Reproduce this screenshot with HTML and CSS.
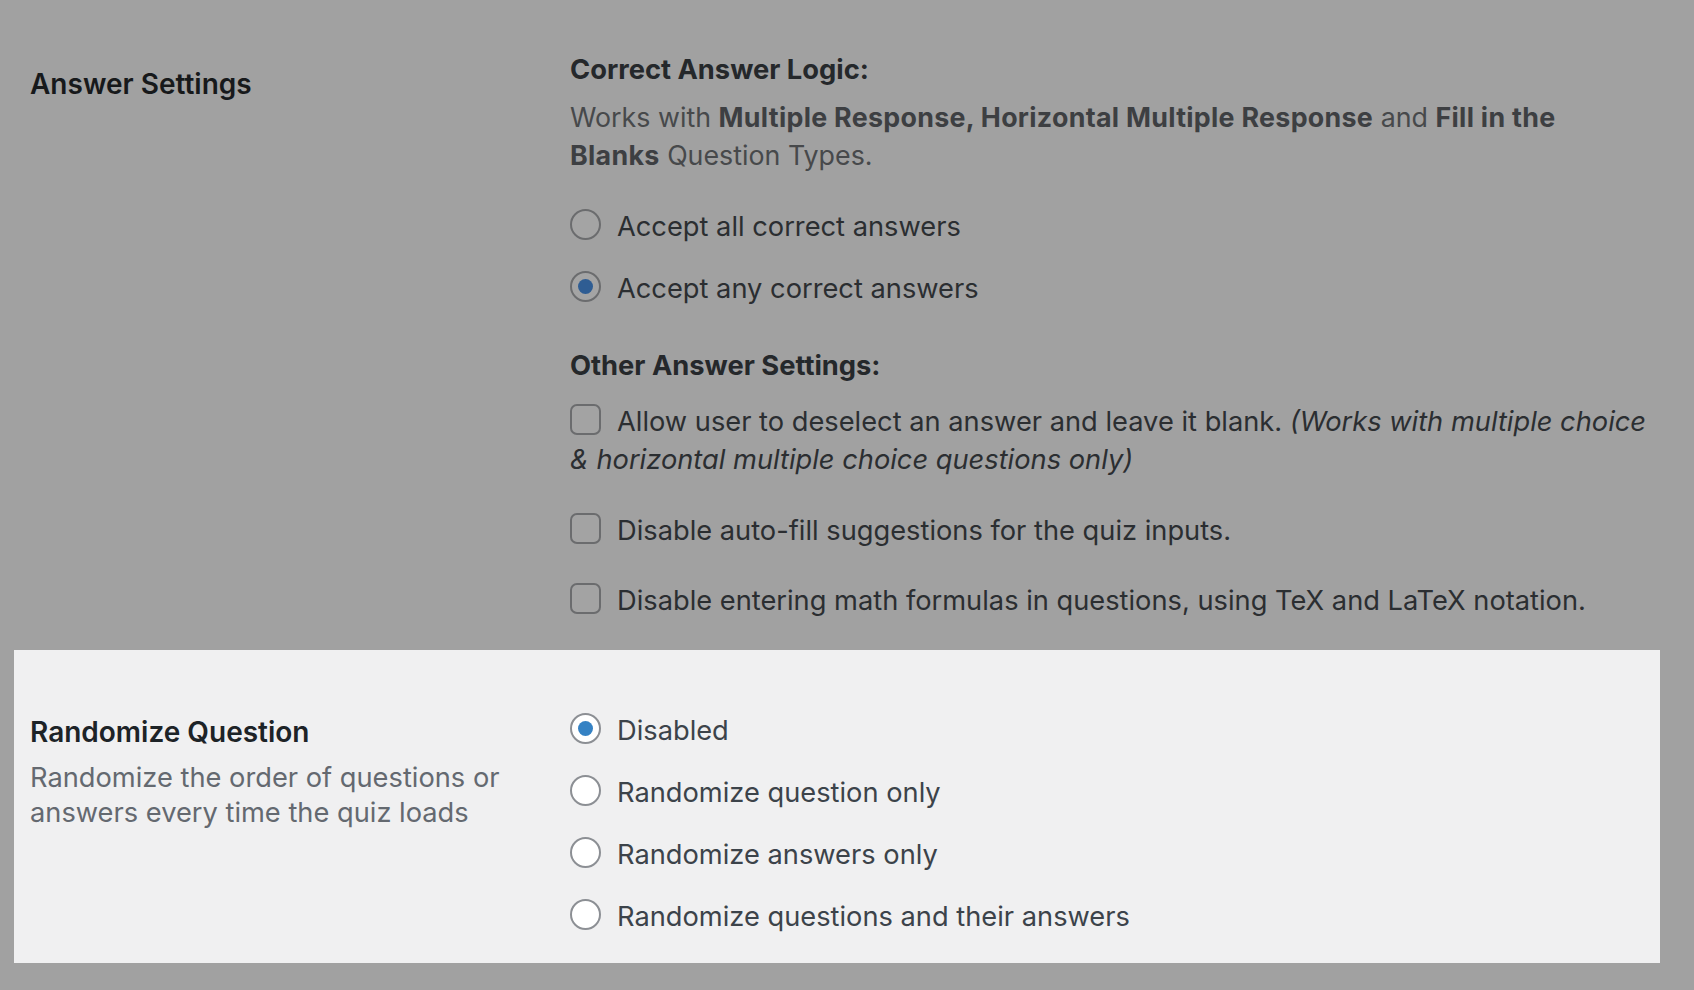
FILE: index.html
```html
<!DOCTYPE html>
<html lang="en">
<head>
<meta charset="utf-8">
<title>Quiz Settings</title>
<link rel="stylesheet" href="styles.css">
</head>
<body>
<div class="settings">
  <div class="row dim">
    <div class="th th-top">
      <div class="th-label">Answer Settings</div>
    </div>
    <div class="td td-top">
      <div class="sub">Correct Answer Logic:</div>
      <p class="desc">Works with <b>Multiple Response, Horizontal Multiple Response</b> and <b>Fill in the Blanks</b> Question Types.</p>
      <label class="opt opt-first"><span class="radio"></span>Accept all correct answers</label>
      <label class="opt opt-next"><span class="radio checked"></span>Accept any correct answers</label>
      <div class="sub sub-2">Other Answer Settings:</div>
      <label class="opt cb-first"><span class="checkbox"></span>Allow user to deselect an answer and leave it blank. <em>(Works with multiple choice &amp; horizontal multiple choice questions only)</em></label>
      <label class="opt cb-second"><span class="checkbox"></span>Disable auto-fill suggestions for the quiz inputs.</label>
      <label class="opt cb-third"><span class="checkbox"></span>Disable entering math formulas in questions, using TeX and LaTeX notation.</label>
    </div>
  </div>
  <div class="row panel">
    <div class="th th-panel">
      <div class="th-label">Randomize Question</div>
      <p class="th-desc">Randomize the order of questions or answers every time the quiz loads</p>
    </div>
    <div class="td td-panel">
      <label class="opt"><span class="radio checked"></span>Disabled</label>
      <label class="opt opt-next"><span class="radio"></span>Randomize question only</label>
      <label class="opt opt-next"><span class="radio"></span>Randomize answers only</label>
      <label class="opt opt-next"><span class="radio"></span>Randomize questions and their answers</label>
    </div>
  </div>
</div>
</body>
</html>
```

FILE: styles.css
```css
html, body {
  margin: 0;
  padding: 0;
}
body {
  background: #a1a1a1;
  font-family: Inter, "Liberation Sans", Arial, sans-serif;
  width: 1694px;
  height: 990px;
  overflow: hidden;
}
.settings {
  padding-left: 14px;
  width: 1646px;
}
.row {
  display: flex;
  padding-left: 16px;
}
.th {
  flex: 0 0 510px;
  padding-right: 30px;
}
.td {
  flex: 1 1 auto;
  padding-right: 10px;
}
.th-label {
  font-size: 28px;
  line-height: 38px;
  font-weight: 600;
  color: #1d2327;
}
.dim .th-label {
  color: #17191b;
}
.th-top {
  padding-top: 65px;
}
.td-top {
  padding-top: 52px;
  padding-bottom: 30px;
}
.sub {
  font-size: 27.3px;
  line-height: 36px;
  font-weight: 700;
  color: #25282b;
}
.sub-2 {
  margin-top: 40px;
}
.desc {
  margin: 10px 0 0;
  padding-right: 40px;
  font-size: 26.8px;
  line-height: 38px;
  color: #47494b;
}
.desc b {
  font-weight: 700;
  letter-spacing: 0.3px;
  color: #3d3f42;
}
.opt {
  display: block;
  font-size: 27.25px;
  line-height: 38px;
  color: #2b2e31;
}
.opt-first {
  margin-top: 34px;
}
.opt-next {
  margin-top: 24px;
}
.cb-first {
  margin-top: 19px;
}
.cb-second {
  margin-top: 33px;
}
.cb-third {
  margin-top: 32px;
}
.opt em {
  font-style: italic;
}
.radio, .checkbox {
  display: inline-block;
  box-sizing: border-box;
  width: 31px;
  height: 31px;
  margin-right: 16px;
  vertical-align: -4px;
  position: relative;
}
.radio {
  border-radius: 50%;
  border: 2px solid #6b6c6e;
  background: #a4a4a4;
}
.checkbox {
  border-radius: 7px;
  border: 2px solid #6b6c6e;
  background: #a3a3a3;
}
.radio.checked::after {
  content: "";
  position: absolute;
  left: 6px;
  top: 6px;
  width: 15px;
  height: 15px;
  border-radius: 50%;
  background: #2f5d93;
}
.panel {
  background: #f0f0f1;
}
.th-panel {
  padding-top: 63px;
}
.th-desc {
  margin: 9px 0 0;
  font-size: 27.25px;
  line-height: 35px;
  color: #646970;
}
.td-panel {
  padding-top: 62px;
  padding-bottom: 27px;
}
.panel .opt {
  color: #3c434a;
}
.panel .radio {
  border-color: #8c8f94;
  background: #ffffff;
}
.panel .radio.checked::after {
  background: #3582c4;
}
```
